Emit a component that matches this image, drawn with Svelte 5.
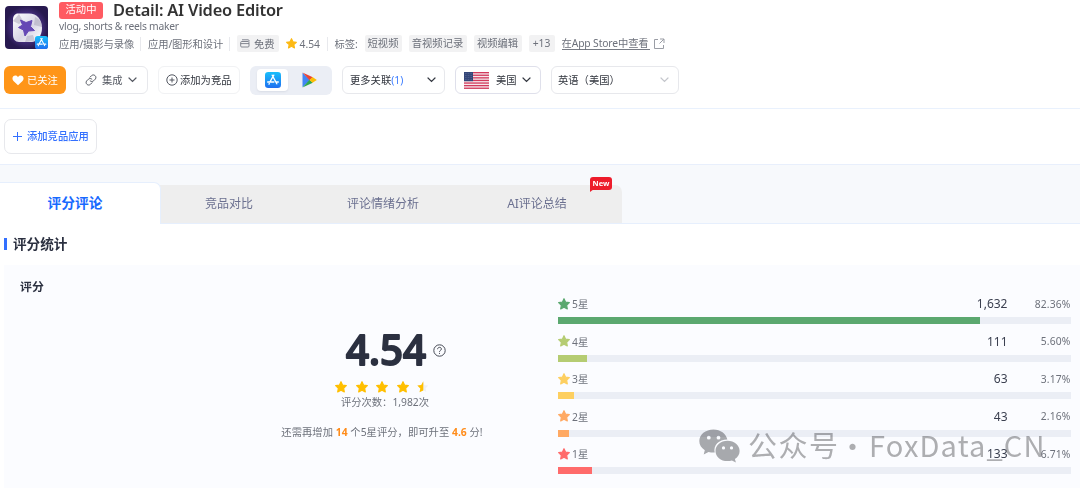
<script>
  let tags = [
    { name: "短视频", width: 37 },
    { name: "音视频记录", width: 58 },
    { name: "视频编辑", width: 48 },
    { name: "+13", width: 26 },
  ];

  let tabs = ["评分评论", "竞品对比", "评论情绪分析", "AI评论总结"];
  let active = 0;

  let ratings = [
    { star: 5, count: "1,632", percent: 82.36, color: "#5ba86f" },
    { star: 4, count: "111", percent: 5.6, color: "#b5cc72" },
    { star: 3, count: "63", percent: 3.17, color: "#fdcf60" },
    { star: 2, count: "43", percent: 2.16, color: "#ffa963" },
    { star: 1, count: "133", percent: 6.71, color: "#ff6b6b" },
  ];

  const starPath = "M10 1.2l2.7 5.7 6.2.8-4.6 4.3 1.2 6.2L10 15.200l-5.500 3 1.200-6.200L1.100 7.700l6.200-.8z";
</script>

{#snippet star(color, size)}
  <svg class="star" width={size} height={size} viewBox="0 0 20 20">
    <path d={starPath} fill={color} stroke={color} stroke-width="2" stroke-linejoin="round" />
  </svg>
{/snippet}

{#snippet chevron(color)}
  <svg class="chevron" width="9" height="6" viewBox="0 0 9 6">
    <path d="M1 1l3.500 3.500L8 1" fill="none" stroke={color} stroke-width="1.2" stroke-linecap="round" />
  </svg>
{/snippet}

{#snippet appStore(size)}
  <svg width={size} height={size} viewBox="0 0 16 16">
    <defs>
      <linearGradient id="store{size}" x1="0" y1="0" x2="0" y2="1">
        <stop offset="0" stop-color="#18bffb" />
        <stop offset="1" stop-color="#1f6ff0" />
      </linearGradient>
    </defs>
    <rect width="16" height="16" rx="3.200" fill="url(#store{size})" />
    <path d="M8.800 3.200L4.900 10M7.200 3.200l4.600 8.600M2.700 10h6.200M11 10h2.300M4.300 11.600l-.3.500" fill="none" stroke="#fff" stroke-width="1.350" stroke-linecap="round" />
  </svg>
{/snippet}

<main>
  <header>
    <div class="app">
      <div class="logo">
        <svg width="43" height="43" viewBox="0 0 43 43">
          <defs>
            <radialGradient id="night">
              <stop offset="0" stop-color="#7055c4" />
              <stop offset=".6" stop-color="#493184" />
              <stop offset="1" stop-color="#27194f" />
            </radialGradient>
            <linearGradient id="silver" x1="0" y1="0" x2="1" y2="1">
              <stop offset="0" stop-color="#fff" />
              <stop offset=".55" stop-color="#d9d6e6" />
              <stop offset="1" stop-color="#fff" />
            </linearGradient>
          </defs>
          <rect width="43" height="43" rx="4" fill="url(#night)" />
          <path d="M13 7.500h11c8 0 13 6 13 14.500 0 8-5 14-11 14H14c-4 0-6-3-6-7V13c0-3 2-5.500 5-5.500z" fill="url(#silver)" />
          <path d="M14 8l4 7-4 3-6-3zM37 21l-8-2 1-8c4 2 7 5 7 10zM20 36l2-6 6-1 2 6z" fill="#a7a3b8" opacity=".5" />
          <path d="M15.500 14l5.500 2.500 6-2-1.500 6 4 4-6 .5-3.500 5-1.500-6-5-2.500 4-2.500z" fill="#6547b5" stroke="#6547b5" stroke-linejoin="round" />
        </svg>
        <span class="store">{@render appStore(13)}</span>
      </div>
      <div class="info">
        <div class="name">
          <span class="status">活动中</span>
          <h1>Detail: AI Video Editor</h1>
        </div>
        <p class="subtitle">vlog, shorts &amp; reels maker</p>
        <div class="meta">
          <span class="category">应用/摄影与录像</span>
          <span class="category">应用/图形和设计</span>
          <span class="free">
            <svg width="10" height="9" viewBox="0 0 10 9" fill="none" stroke="#777b86" stroke-width=".9">
              <rect x=".7" y="2.500" width="8.300" height="5.500" rx="1" />
              <path d="M2 .8h6.500l1 1.500M.7 4.600H9" />
            </svg>
            免费
          </span>
          <span class="score">{@render star("#fdb913", 11)}4.54</span>
          <span class="label">标签:</span>
          {#each tags as tag}
            <span class="tag" style="width: {tag.width}px">{tag.name}</span>
          {/each}
          <span class="link">在App Store中查看</span>
          <svg class="external" width="12" height="12" viewBox="0 0 12 12" fill="none" stroke="#9a9da5">
            <path d="M5 1.500H1.500v9h9V7M7 1h4v4M11 1L6.500 5.500" />
          </svg>
        </div>
      </div>
    </div>

    <div class="actions">
      <button class="followed">
        <svg width="12" height="11" viewBox="0 0 12 11">
          <path d="M6 10.300L1.500 6C-.8 3.400 1.100.6 3.300.6 4.600.6 5.500 1.300 6 2.200 6.500 1.300 7.400.6 8.700.6c2.200 0 4.100 2.800 1.800 5.400z" fill="#fff" />
        </svg>
        <span>已关注</span>
      </button>
      <button class="integrate">
        <svg width="12" height="12" viewBox="0 0 12 12" fill="none" stroke="#555962" stroke-linecap="round">
          <path d="M5 3.200l1.600-1.600c2.300-2 5.700 1 3.700 3.500L8.600 6.800C7.600 7.800 6 7.700 5.100 6.800M7 8.700l-1.600 1.700c-2.300 2-5.700-1-3.700-3.500l1.700-1.700c1-1 2.600-.9 3.500 0" />
        </svg>
        <span>集成</span>
        {@render chevron("#555962")}
      </button>
      <button class="compete">
        <svg width="12" height="12" viewBox="0 0 12 12" fill="none" stroke="#4a4e58" stroke-width=".95">
          <circle cx="6" cy="6" r="5.200" />
          <path d="M6 3.500v5M3.500 6h5" />
        </svg>
        <span>添加为竞品</span>
      </button>
      <div class="switch">
        <span class="chosen">{@render appStore(16)}</span>
        <svg width="15" height="16" viewBox="0 0 15 16">
          <path d="M.5.8L8 8 .5 15.200z" fill="#4285f4" />
          <path d="M.5.5l10.300 4.800L7.500 8.300z" fill="#ea4335" />
          <path d="M.5 15.500L7.500 7.700l3.300 3z" fill="#2fa64f" />
          <path d="M10.500 5.100L14.800 8l-4.300 2.800L7.500 8z" fill="#fbbc04" />
        </svg>
      </div>
      <button class="related"><span>更多关联<em>(1)</em></span>{@render chevron("#343841")}</button>
      <button class="country">
        <svg width="25" height="17" viewBox="0 0 25 17">
          <rect width="25" height="17" fill="#f5e8ec" />
          {#each [0, 1, 2, 3, 4, 5, 6] as i}
            <rect y={i * 2.6} width="25" height="1.300" fill="#d23a5c" />
          {/each}
          <rect width="9" height="9.200" fill="#344779" />
          <path d="M1 1.500h7M1 3.500h7M1 5.500h7M1 7.500h7" stroke="#8491b1" stroke-width=".5" stroke-dasharray=".6 1" />
        </svg>
        <span>美国</span>
        {@render chevron("#343841")}
      </button>
      <button class="language"><span>英语（美国）</span>{@render chevron("#c4c6cc")}</button>
    </div>
  </header>

  <section class="competitors">
    <button>
      <svg width="9" height="9" viewBox="0 0 9 9"><path d="M4.500 0v9M0 4.500h9" stroke="#3370ff" /></svg>
      <span>添加竞品应用</span>
    </button>
  </section>

  <nav>
    {#each tabs as tab, i}
      <div class="tab" class:active={i == active} class:last={i == tabs.length - 1}>
        {tab}
        {#if i == tabs.length - 1}
          <span class="new">New</span>
        {/if}
      </div>
    {/each}
  </nav>

  <section class="stats">
    <h2>评分统计</h2>
    <div class="card">
      <h3>评分</h3>
      <div class="summary">
        <div class="average">
          <svg class="number" width="84" height="44" viewBox="0 0 84 44">
            <text x="2" y="37" textLength="80" lengthAdjust="spacingAndGlyphs">4.54</text>
          </svg>
          <svg width="13" height="13" viewBox="0 0 13 13" fill="none" stroke="#454954">
            <circle cx="6.500" cy="6.500" r="5.700" />
            <path d="M4.600 5.200c0-2.500 3.800-2.400 3.800-.2 0 1.400-1.900 1.400-1.900 2.800M6.500 8.900v1" />
          </svg>
        </div>
        <div class="stars">
          {#each [1, 2, 3, 4] as n}
            {@render star("#ffbf00", 12)}
          {/each}
          <svg width="12" height="12" viewBox="0 0 20 20">
            <path d={starPath} fill="#eff0f3" />
            <path d="M10.500.3v15.400l-6.300 3.200 1.300-6.600L.5 7.500l6.500-.9z" fill="#ffbf00" />
          </svg>
        </div>
        <p class="total">评分次数：1,982次</p>
        <p class="goal">还需再增加 <b>14</b> 个5星评分，即可升至 <b>4.6</b> 分!</p>
      </div>
      <div class="ratings">
        {#each ratings as rating}
          <div class="rating">
            <div class="line">
              {@render star(rating.color, 12)}
              <span class="level">{rating.star}星</span>
              <span class="count">{rating.count}</span>
              <span class="percent">{rating.percent.toFixed(2)}%</span>
            </div>
            <div class="track">
              <div class="fill" style="width: {rating.percent}%; background: {rating.color}"></div>
            </div>
          </div>
        {/each}
      </div>
    </div>
  </section>

  <div class="watermark">
    <svg width="41" height="34" viewBox="0 0 41 34">
      <path fill="#aaabad" fill-rule="evenodd" d="M14.500.5C6.500.5.3 5.600.3 12c0 3.800 2 7 5.500 9.200L4.700 25.500l4.800-2.600c2 .6 4 .8 6.200.7C14 16.500 20 10.500 28.400 10.600 27 4.800 21.500.5 14.500.5zM9.800 6.800a1.900 1.900 0 1 1 0 3.800 1.900 1.900 0 0 1 0-3.800zM19.500 6.800a1.900 1.900 0 1 1 0 3.800 1.900 1.900 0 0 1 0-3.800z" />
      <path fill="#aaabad" fill-rule="evenodd" d="M28.500 11.800c-6.800 0-12 4.500-12 10.100s5.200 10.200 12 10.200c1.600 0 3-.2 4.400-.7l4 2.100-1-3.600c3-1.900 4.700-4.700 4.700-8 0-5.600-5.300-10.100-12.100-10.100zM24.500 17.300a1.600 1.600 0 1 1 0 3.200 1.600 1.600 0 0 1 0-3.200zM32.500 17.300a1.600 1.600 0 1 1 0 3.200 1.600 1.600 0 0 1 0-3.200z" />
    </svg>
    <span class="account">公众号</span>
    <span class="dot">·</span>
    <span class="brand">FoxData_CN</span>
  </div>
</main>

<style>
  :global(body) {
    margin: 0;
    background: #fff;
  }

  main {
    position: relative;
    box-sizing: border-box;
    width: 1080px;
    height: 490px;
    overflow: hidden;
    font-family: "Noto Sans", "Noto Sans CJK SC", sans-serif;
    font-size: 10.3px;
    color: #6d717b;
    white-space: nowrap;
  }

  main :global(*) {
    box-sizing: border-box;
  }

  h1, h2, h3, p {
    margin: 0;
  }

  svg {
    display: block;
    flex-shrink: 0;
  }

  header {
    height: 109px;
    border-bottom: 1px solid #e9f1fd;
  }

  .app {
    display: flex;
    height: 66px;
    padding-left: 5px;
  }

  .logo {
    position: relative;
    width: 43px;
    height: 43px;
    margin: 6px 11px 0 0;
  }

  .store {
    position: absolute;
    right: 0;
    bottom: 0;
  }

  .name {
    display: flex;
    height: 20px;
    padding-top: 2px;
  }

  .status {
    width: 44px;
    height: 17px;
    margin-right: 10px;
    border-radius: 3px;
    background: #ff5b62;
    color: #fff;
    line-height: 15px;
    text-align: center;
  }

  h1 {
    margin-top: -2px;
    color: #333;
    font-size: 16.400px;
    font-weight: 600;
    line-height: 19px;
    letter-spacing: -0.2px;
  }

  .subtitle {
    height: 15px;
    line-height: 13px;
    letter-spacing: -0.24px;
  }

  .meta {
    display: flex;
    align-items: center;
    height: 17px;
    line-height: 16px;
  }

  .category, .score {
    border-right: 1px solid #e8e9ed;
    line-height: 14px;
  }

  .category {
    width: 82px;
    margin-right: 7px;
    letter-spacing: -0.1px;
  }

  .free {
    display: flex;
    align-items: center;
    gap: 4px;
    width: 41.500px;
    height: 17px;
    padding-left: 3px;
    border-radius: 2px;
    background: #f2f2f3;
  }

  .score {
    display: flex;
    align-items: center;
    gap: 3px;
    width: 42px;
    margin: 0 7px;
  }

  .label {
    width: 30px;
  }

  .tag {
    height: 17px;
    margin-right: 7px;
    border-radius: 2px;
    background: #f2f2f3;
    text-align: center;
  }

  .link {
    width: 88px;
    margin-right: 3px;
    line-height: 12px;
    border-bottom: 1px solid #777b84;
    letter-spacing: -0.12px;
  }

  .actions {
    display: flex;
    align-items: center;
    height: 28px;
    padding-left: 4px;
  }

  button {
    display: flex;
    align-items: center;
    height: 28px;
    margin: 0 10px 0 0;
    padding: 0;
    border: 1px solid #e7e8ec;
    border-radius: 6px;
    background: #fff;
    color: #30343d;
    font: inherit;
  }

  button span {
    padding-bottom: 2px;
  }

  .followed {
    width: 62px;
    padding-left: 8px;
    gap: 3px;
    border: none;
    background: #ff9518;
    color: #fff;
  }

  .integrate {
    width: 72px;
    padding-left: 8px;
    gap: 5px;
    color: #555962;
  }

  .compete {
    width: 82px;
    padding-left: 7px;
    gap: 2px;
    border-color: #f1f2f4;
  }

  .switch {
    display: flex;
    align-items: center;
    width: 82px;
    height: 29px;
    margin-right: 10px;
    padding-left: 7px;
    gap: 14px;
    border-radius: 6px;
    background: #ebeef5;
  }

  .chosen {
    display: flex;
    justify-content: center;
    align-items: center;
    width: 31px;
    height: 22px;
    border-radius: 4px;
    background: #fff;
    box-shadow: 0 1px 2px #d8dce5;
  }

  .related {
    width: 103px;
    padding: 0 8px 0 7px;
    justify-content: space-between;
  }

  .related em {
    color: #3b7cff;
    font-style: normal;
  }

  .country {
    width: 86px;
    padding-left: 8px;
    gap: 7px;
    border-color: #dfe0eb;
  }

  .country .chevron {
    margin-left: -2px;
  }

  .language {
    width: 128px;
    padding: 0 9px 0 6px;
    justify-content: space-between;
  }

  .competitors {
    height: 56px;
    padding: 10px 0 0 4px;
    border-bottom: 1px solid #e8effc;
  }

  .competitors button {
    width: 93px;
    height: 35px;
    padding-left: 8px;
    gap: 5px;
    border-radius: 7px;
    color: #3370ff;
    font-weight: 500;
  }

  nav {
    display: flex;
    align-items: flex-end;
    height: 59px;
    border-bottom: 1px solid #e6effd;
    background: #f7f9fc;
  }

  .tab {
    position: relative;
    width: 154px;
    height: 38px;
    padding-right: 16px;
    background: #eee;
    color: #6b7090;
    font-size: 12px;
    line-height: 37px;
    text-align: center;
  }

  .tab.active {
    width: 161px;
    height: 42px;
    padding-right: 10px;
    margin-bottom: -1px;
    margin-right: -1px;
    z-index: 1;
    border: 1px solid #e6effd;
    border-width: 1px 1px 0 0;
    border-radius: 0 7px 0 0;
    background: #fff;
    color: #1769ff;
    font-size: 13.700px;
    font-weight: 700;
    line-height: 39px;
  }

  .tab.last {
    border-radius: 0 7px 0 0;
  }

  .new {
    position: absolute;
    top: -8px;
    right: 10px;
    width: 22px;
    height: 13px;
    border-radius: 3px 3px 3px 0;
    background: #ed1c2b;
    color: #fff;
    font-size: 7.500px;
    font-weight: 700;
    line-height: 13px;
  }

  .new::after {
    content: "";
    position: absolute;
    left: 0;
    top: 12px;
    border-top: 3px solid #ed1c2b;
    border-right: 4px solid transparent;
  }

  h2 {
    display: flex;
    align-items: center;
    gap: 6px;
    height: 41px;
    padding: 0 0 3px 4px;
    color: #2b3040;
    font-size: 13.600px;
    font-weight: 700;
  }

  h2::before {
    content: "";
    width: 3px;
    height: 12px;
    margin-top: 2px;
    background: #3370ff;
  }

  .card {
    display: flex;
    height: 223px;
    margin-left: 4px;
    background: #fbfcff;
  }

  h3 {
    width: 202px;
    padding: 12px 0 0 16px;
    color: #2b3040;
    font-size: 11.900px;
    font-weight: 700;
    line-height: 18px;
  }

  .summary {
    display: flex;
    flex-direction: column;
    align-items: center;
    width: 352px;
    padding-top: 63px;
  }

  .average {
    display: flex;
    align-items: center;
    gap: 5px;
    height: 44px;
    padding-left: 25px;
  }

  .number text {
    fill: #2b3040;
    stroke: #2b3040;
    stroke-width: 2;
    stroke-linejoin: round;
    font-size: 41px;
    font-weight: 500;
  }

  .stars {
    display: flex;
    gap: 8.500px;
    margin-top: 9px;
  }

  .total {
    height: 18px;
    padding-left: 6px;
    line-height: 18px;
  }

  .goal {
    margin-top: 12px;
    line-height: 18px;
    letter-spacing: 0.04px;
  }

  .goal b {
    color: #ff8c1a;
    font-weight: 700;
  }

  .ratings {
    width: 512.500px;
    padding-top: 31px;
  }

  .rating {
    height: 37.500px;
  }

  .line {
    display: flex;
    align-items: center;
    height: 21px;
    padding-bottom: 6px;
  }

  .level {
    margin-left: 2px;
  }

  .count {
    flex: 1;
    color: #3b4050;
    font-size: 12px;
    text-align: right;
  }

  .percent {
    width: 63px;
    text-align: right;
    letter-spacing: 0.15px;
  }

  .track {
    height: 7px;
    background: #ebeef5;
  }

  .fill {
    height: 7px;
  }

  .watermark {
    position: absolute;
    left: 699px;
    top: 428px;
    display: flex;
    align-items: center;
    height: 35px;
    color: #b0b0b1;
    font-family: "Noto Sans CJK SC", sans-serif;
    font-size: 29px;
    line-height: 33px;
    mix-blend-mode: multiply;
  }

  .account {
    width: 90px;
    margin-left: 8px;
    padding-bottom: 2px;
    letter-spacing: 1.500px;
  }

  .dot {
    width: 29px;
    text-align: center;
  }

  .brand {
    margin-left: 2px;
    padding-bottom: 2px;
    letter-spacing: 1.150px;
  }
</style>
